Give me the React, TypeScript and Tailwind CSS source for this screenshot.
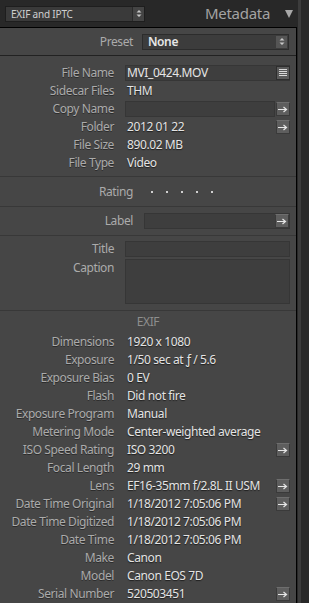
import React from "react";

const font = { fontFamily: '"Segoe UI", "Noto Sans", "Open Sans", sans-serif' };

function ArrowButton() {
  return (
    <div className="flex h-[14px] w-[14px] shrink-0 items-center justify-center border border-[#3a3a3a] border-t-[#6e6e6e] bg-[#5e5e5e]">
      <svg width="10" height="7" viewBox="0 0 10 7">
        <path d="M0 3.5H8M5.5 1L8.5 3.5L5.5 6" stroke="#e6e6e6" strokeWidth="1.2" fill="none" />
      </svg>
    </div>
  );
}

function ListButton() {
  return (
    <div className="flex h-[14px] w-[14px] shrink-0 items-center justify-center border border-[#2e2e2e] bg-[#5a5a5a]">
      <svg width="10" height="10" viewBox="0 0 10 10">
        <path d="M1 1.5H9M1 3.5H9M1 5.5H9M1 7.5H9" stroke="#d8d8d8" strokeWidth="1" fill="none" />
      </svg>
    </div>
  );
}

function Updown() {
  return (
    <svg width="6" height="9" viewBox="0 0 6 9">
      <path d="M0.5 3.5L3 1L5.5 3.5Z M0.5 5.5L3 8L5.5 5.5Z" fill="#c8c8c8" />
    </svg>
  );
}

function Row({
  label,
  value,
  field,
  button,
}: {
  label: string;
  value?: string;
  field?: boolean;
  button?: "arrow" | "list";
}) {
  return (
    <div className="flex h-[18px] items-center">
      <div className="w-[114px] shrink-0 text-right text-[#ababab] [text-shadow:0_1px_0_#2c2c2c]">{label}</div>
      <div className="ml-[11px] flex h-[16px] w-[165px] items-center">
        {field ? (
          <div className="flex h-[16px] flex-1 items-center border border-[#363636] bg-[#3e3e3e] pl-[1px] text-[#e6e6e6]">
            {value}
          </div>
        ) : (
          <div className="flex-1 pl-[2px] text-[#e4e4e4] [text-shadow:0_1px_1px_#1e1e1e]">{value}</div>
        )}
        {button === "arrow" && (
          <div className="ml-[1px]">
            <ArrowButton />
          </div>
        )}
        {button === "list" && (
          <div className="-ml-[14px]">
            <ListButton />
          </div>
        )}
      </div>
    </div>
  );
}

function Divider() {
  return <div className="h-px bg-[#383838]" />;
}

export default function App() {
  const exif: [string, string, ("arrow" | undefined)?][] = [
    ["Dimensions", "1920 x 1080"],
    ["Exposure", "1/50 sec at \u0192 / 5.6"],
    ["Exposure Bias", "0 EV"],
    ["Flash", "Did not fire"],
    ["Exposure Program", "Manual"],
    ["Metering Mode", "Center-weighted average"],
    ["ISO Speed Rating", "ISO 3200", "arrow"],
    ["Focal Length", "29 mm"],
    ["Lens", "EF16-35mm f/2.8L II USM", "arrow"],
    ["Date Time Original", "1/18/2012 7:05:06 PM", "arrow"],
    ["Date Time Digitized", "1/18/2012 7:05:06 PM"],
    ["Date Time", "1/18/2012 7:05:06 PM"],
    ["Make", "Canon"],
    ["Model", "Canon EOS 7D"],
    ["Serial Number", "520503451", "arrow"],
  ];

  return (
    <div
      className="flex h-[603px] w-[309px] overflow-hidden bg-[#282828] text-[12px] leading-none tracking-[-0.4px]"
      style={font}
    >
      <div className="flex w-[297px] flex-col">
        {/* header */}
        <div className="flex h-[27px] shrink-0 items-center pl-[5px] pr-[4px]">
          <div className="flex h-[16px] w-[140px] items-center border border-[#1e1e1e] bg-[#3a3a3a]">
            <span className="flex-1 pl-[5px] text-[10px] tracking-[-0.2px] text-[#cfcfcf]">EXIF and IPTC</span>
            <div className="flex h-full w-[12px] items-center justify-center border-l border-[#2a2a2a] bg-[#444]">
              <Updown />
            </div>
          </div>
          <span className="ml-auto text-[15px] tracking-[-0.3px] text-[#a3a3a3]">Metadata</span>
          <svg className="ml-[15px] mr-[0px]" width="8" height="9" viewBox="0 0 8 9">
            <path d="M0 1H8L4 9Z" fill="#a8a8a8" />
          </svg>
        </div>

        {/* body */}
        <div className="flex flex-1 flex-col border-r border-t border-black bg-[#464646]">
          <div className="flex h-[27px] items-center">
            <div className="w-[133px] text-right text-[#ababab]">Preset</div>
            <div className="ml-[9px] flex h-[16px] w-[147px] items-center border border-[#2c2c2c] bg-[#3c3c3c]">
              <span className="flex-1 pl-[5px] font-semibold text-[#e6e6e6]">None</span>
              <div className="mr-[1px] flex h-[12px] w-[11px] items-center justify-center bg-[#555]">
                <Updown />
              </div>
            </div>
          </div>
          <div className="h-px bg-[#222]" />

          <div className="flex flex-col pt-[8px] pb-[4px]">
            <Row label="File Name" value="MVI_0424.MOV" field button="list" />
            <Row label="Sidecar Files" value="THM" />
            <Row label="Copy Name" field button="arrow" />
            <Row label="Folder" value="2012 01 22" button="arrow" />
            <Row label="File Size" value="890.02 MB" />
            <Row label="File Type" value="Video" />
          </div>
          <Divider />

          <div className="flex h-[29px] items-center">
            <div className="w-[133px] text-right text-[#ababab]">Rating</div>
            <div className="ml-[18px] flex gap-[13px]">
              {[0, 1, 2, 3, 4].map((i) => (
                <div key={i} className="h-[2px] w-[2px] bg-[#d0d0d0]" />
              ))}
            </div>
          </div>
          <Divider />

          <div className="flex h-[28px] items-center">
            <div className="w-[133px] text-right text-[#ababab]">Label</div>
            <div className="ml-[11px] flex h-[16px] w-[146px] items-center border border-[#363636] bg-[#3e3e3e]">
              <div className="flex-1" />
              <ArrowButton />
            </div>
          </div>
          <Divider />

          <div className="flex flex-col pt-[4px] pb-[6px]">
            <div className="flex h-[18px] items-center">
              <div className="w-[114px] text-right text-[#ababab]">Title</div>
              <div className="ml-[11px] h-[16px] w-[165px] border border-[#363636] bg-[#3e3e3e]" />
            </div>
            <div className="mt-[1px] flex">
              <div className="w-[114px] pt-[3px] text-right text-[#ababab]">Caption</div>
              <div className="ml-[11px] h-[45px] w-[165px] border border-[#363636] bg-[#3e3e3e]" />
            </div>
          </div>
          <Divider />

          <div className="flex h-[22px] items-center">
            <div className="w-[313px] text-center text-[#8e8e8e]">EXIF</div>
          </div>
          <div className="flex flex-col">
            {exif.map(([l, v, b]) => (
              <Row key={l} label={l} value={v} button={b} />
            ))}
          </div>
        </div>
      </div>
      <div className="flex w-[12px]">
        <div className="ml-[1px] w-[3px] bg-[#3c3c3c]" />
      </div>
    </div>
  );
}
